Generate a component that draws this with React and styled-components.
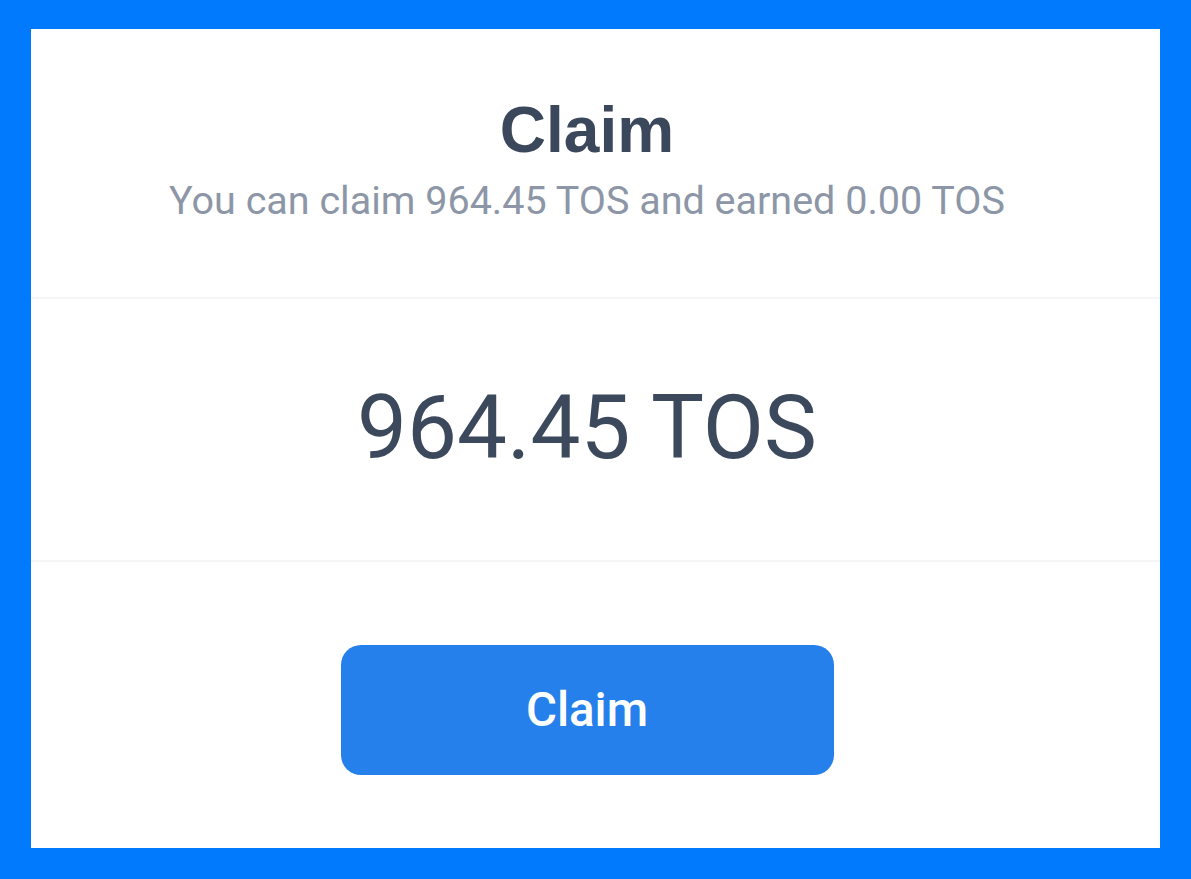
import React from "react";
import styled, { createGlobalStyle } from "styled-components";

const GlobalStyle = createGlobalStyle`
   html, body {
      margin: 0;
      padding: 0;
      background: #017afe;
   }

   body {
      font-family: Roboto, "Liberation Sans", Arial, sans-serif;
   }
`;

const Page = styled.div`
   padding: 29px 31px 31px;
   min-height: 100vh;
   box-sizing: border-box;
`;

const Card = styled.div`
   background: #ffffff;
   height: 819px;
   display: flex;
   flex-direction: column;
   text-align: center;
`;

// content sits a little left of the card's centre in the reference
const Section = styled.div`
   padding-right: 17px;
   border-bottom: ${({ $divider }) => ($divider ? "2px solid #f4f5f7" : "none")};
`;

const Header = styled(Section)`
   padding-top: 69px;
   padding-bottom: 76px;
`;

const Title = styled.h2`
   margin: 0;
   font-family: "Liberation Sans", Arial, sans-serif;
   font-size: 64px;
   line-height: 1;
   font-weight: 700;
   color: #3b475b;
`;

const Subtitle = styled.p`
   margin: 19px 0 0;
   font-size: 39.5px;
   line-height: 1;
   color: #8c96a6;
`;

const Amount = styled(Section)`
   padding-top: 84px;
   padding-bottom: 88px;
   font-size: 89px;
   line-height: 1;
   color: #3c485c;
`;

const Footer = styled(Section)`
   flex: 1;
   display: flex;
   justify-content: center;
   padding-top: 83px;
`;

const ClaimButton = styled.button`
   width: 493px;
   height: 130px;
   border: none;
   border-radius: 20px;
   background: #2680eb;
   color: #ffffff;
   font-family: Roboto, sans-serif;
   font-size: 47.5px;
   font-weight: 500;
   cursor: pointer;
`;

export default function App() {
   const claimable = "964.45";
   const earned = "0.00";

   return (
      <>
         <GlobalStyle />
         <Page>
            <Card>
               <Header $divider>
                  <Title>Claim</Title>
                  <Subtitle>
                     You can claim {claimable} TOS and earned {earned} TOS
                  </Subtitle>
               </Header>
               <Amount $divider>{claimable} TOS</Amount>
               <Footer>
                  <ClaimButton>Claim</ClaimButton>
               </Footer>
            </Card>
         </Page>
      </>
   );
}
